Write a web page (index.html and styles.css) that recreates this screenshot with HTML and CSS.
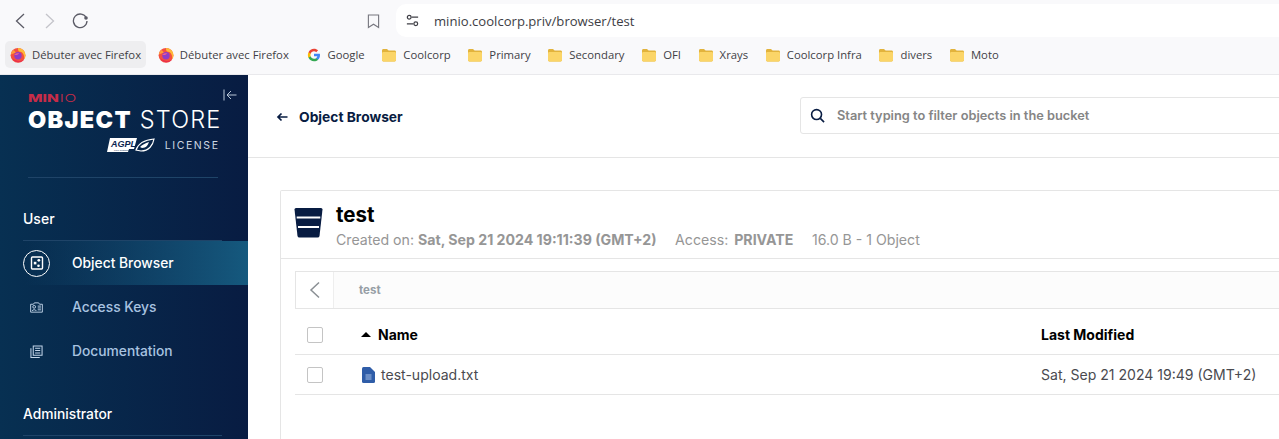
FILE: index.html
```html
<!DOCTYPE html>
<html lang="fr">
<head>
<meta charset="utf-8">
<title>MinIO Object Store</title>
<link rel="stylesheet" href="styles.css">
</head>
<body>
<svg width="0" height="0" class="defs">
  <defs>
    <symbol id="folder" viewBox="0 0 16 16">
      <path d="M1 3.500C1 2.700 1.600 2 2.400 2H6l1.600 1.600h6C14.400 3.600 15 4.200 15 5v8c0 .8-.6 1.400-1.400 1.400H2.400C1.600 14.400 1 13.800 1 13z" fill="#e2b33c"/>
      <path d="M1 6.300c0-.7.6-1.300 1.300-1.300h11.400c.7 0 1.300.6 1.300 1.300V13c0 .8-.6 1.400-1.400 1.400H2.400C1.600 14.400 1 13.800 1 13z" fill="#fbd568"/>
    </symbol>
    <symbol id="firefox" viewBox="0 0 16 16">
      <circle cx="8" cy="8.300" r="7.400" fill="#f4503f"/>
      <path d="M8 .9c4 0 7.500 3 7.500 7.400 0 1.500-.5 3-1.300 4C14.800 8 12.500 4.500 9 4.500 8 3.500 8 2 8 .9z" fill="#ffb938"/>
      <path d="M.8 7.500C1 5.500 2.200 3.800 3.600 3L6 5.500z" fill="#ff9a3c"/>
      <circle cx="8" cy="8.800" r="3.700" fill="#8f3cc8"/>
      <path d="M4.300 8c1-1.500 3-2 5-1.500L7 8z" fill="#f0608a"/>
      <path d="M2 11c1.500 3 4 4.300 6.500 4.300 2.500 0 4.500-1.300 5.700-3-2 1.500-4.500 2-6.700 1.400C5.500 13.200 3.500 12.500 2 11z" fill="#ea2f4c"/>
    </symbol>
  </defs>
</svg>
<header class="chrome">
  <div class="toolbar">
    <div class="nav">
      <svg class="nav-ic" viewBox="0 0 16 16"><path d="M12 1 4.500 8l7.500 7" fill="none" stroke="#5b5b66" stroke-width="1.300"/></svg>
      <svg class="nav-ic" viewBox="0 0 16 16"><path d="m4 1 7.500 7L4 15" fill="none" stroke="#c4c4ca" stroke-width="1.300"/></svg>
      <svg class="nav-ic" viewBox="0 0 16 16"><path d="M14.300 4.800A6.800 6.800 0 1 0 15 8" fill="none" stroke="#5b5b66" stroke-width="1.300"/><circle cx="14" cy="5" r="1.800" fill="#5b5b66"/></svg>
    </div>
    <svg class="bookmark" viewBox="0 0 14 16"><path d="M1.500 1.500h11V15L7 11.500 1.500 15z" fill="none" stroke="#77777f" stroke-width="1.200"/></svg>
    <div class="urlbar">
      <svg class="tune" viewBox="0 0 16 16"><g fill="none" stroke="#3f3f46" stroke-width="1.300"><circle cx="4.500" cy="4.500" r="2"/><path d="M7 4.500h7M2 11.500h7"/><circle cx="11.500" cy="11.500" r="2"/></g></svg>
      <span class="url">minio.coolcorp.priv/browser/test</span>
    </div>
  </div>
  <nav class="bookmarks">
    <a class="bm bm-hover"><svg class="bm-ic"><use href="#firefox"/></svg>Débuter avec Firefox</a>
    <a class="bm"><svg class="bm-ic"><use href="#firefox"/></svg>Débuter avec Firefox</a>
    <a class="bm"><svg class="bm-ic" viewBox="0 0 24 24"><path d="M21 12.200c0-.7-.1-1.300-.2-1.900H12v3.600h5c-.2 1.200-.9 2.100-1.900 2.800v2.300h3C20 17.300 21 15 21 12.200z" fill="#4285f4"/><path d="M12 21.300c2.500 0 4.600-.8 6.100-2.300l-3-2.300c-.8.6-1.900.9-3.100.9-2.400 0-4.400-1.600-5.100-3.800H3.800v2.400c1.500 3 4.600 5.100 8.200 5.100z" fill="#34a853"/><path d="M6.900 13.800c-.4-1.200-.4-2.400 0-3.600V7.800H3.800c-1.300 2.500-1.300 5.500 0 8.400z" fill="#fbbc05"/><path d="M12 6.400c1.300 0 2.500.5 3.400 1.400L18.100 5C16.500 3.600 14.400 2.700 12 2.700c-3.600 0-6.700 2-8.200 5.100l3.100 2.400C7.600 8 9.600 6.400 12 6.400z" fill="#ea4335"/></svg>Google</a>
    <a class="bm"><svg class="bm-ic"><use href="#folder"/></svg>Coolcorp</a>
    <a class="bm"><svg class="bm-ic"><use href="#folder"/></svg>Primary</a>
    <a class="bm"><svg class="bm-ic"><use href="#folder"/></svg>Secondary</a>
    <a class="bm"><svg class="bm-ic"><use href="#folder"/></svg>OFI</a>
    <a class="bm"><svg class="bm-ic"><use href="#folder"/></svg>Xrays</a>
    <a class="bm"><svg class="bm-ic"><use href="#folder"/></svg>Coolcorp Infra</a>
    <a class="bm"><svg class="bm-ic"><use href="#folder"/></svg>divers</a>
    <a class="bm"><svg class="bm-ic"><use href="#folder"/></svg>Moto</a>
  </nav>
</header>
<div class="app">
  <aside class="sidebar">
    <div class="brand">
      <svg class="collapse" viewBox="0 0 14 12"><path d="M1 .5v11M13.500 6H4M8 2 4 6l4 4" fill="none" stroke="#b9c8d8" stroke-width="1"/></svg>
      <div class="minio"><b>MIN</b><span class="minio-sep">I</span><span class="minio-o">O</span></div>
      <div class="product"><b>OBJECT</b> STORE</div>
      <div class="license">
        <svg class="agpl" viewBox="0 0 48 16">
          <path d="M3 1h27l-3 11h-5l-1 3H0z" fill="#fff"/>
          <path d="M29 13c2-6 8-10 18-11-1 6-5 12-13 12z" fill="none" stroke="#fff" stroke-width="1.200"/>
          <path d="M33 10c2-2 5-4 9-5-1 3-3 6-7 6z" fill="#fff"/>
          <text x="4" y="10" class="agpl-t">AGPL</text>
          <text x="7" y="14.400" class="agpl-s">Free Software</text>
        </svg>
        <span class="license-t">LICENSE</span>
      </div>
    </div>
    <div class="group">
      <div class="group-title">User</div>
      <ul class="menu">
        <li class="item active">
          <span class="ic-ring"><svg class="ic ic-active" viewBox="0 0 14 14"><rect x="1.500" y="1" width="11" height="12" rx="1" fill="none" stroke="#fff" stroke-width="1.400"/><circle cx="8.800" cy="4.300" r="1.400" fill="#fff"/><rect x="3.800" y="5.800" width="2.600" height="2.600" fill="#fff"/><circle cx="8.500" cy="9.700" r="1.300" fill="#fff"/></svg></span>
          Object Browser
        </li>
        <li class="item">
          <span class="ic-plain"><svg class="ic" viewBox="0 0 14 14"><path d="M.7 3.500h3l1-1.500h4.600l1 1.500h3v8.500H.7z" fill="none" stroke="#c4d6ea" stroke-width="1"/><circle cx="4.500" cy="6.300" r="1.500" fill="none" stroke="#c4d6ea"/><path d="M2.200 10.800c.4-1.900 4.200-1.900 4.600 0M8.300 5.500h3.500M8.300 7.500h3.500M8.300 9.500h3.500" fill="none" stroke="#c4d6ea"/></svg></span>
          Access Keys
        </li>
        <li class="item">
          <span class="ic-plain"><svg class="ic" viewBox="0 0 14 14"><path d="M3.500 1h9.500v10H3.500zM1 3.500V13.500h9.500M5.500 3.500H11M5.500 6H11M5.500 8.500H11" fill="none" stroke="#c4d6ea" stroke-width="1.100"/></svg></span>
          Documentation
        </li>
      </ul>
    </div>
    <div class="group group-admin">
      <div class="group-title">Administrator</div>
    </div>
  </aside>
  <main class="main">
    <div class="topbar">
      <div class="crumb">
        <svg class="back" viewBox="0 0 12 10"><path d="M11.500 5H2M5.500 1.500 2 5l3.500 3.500" fill="none" stroke="#081c42" stroke-width="1.700"/></svg>
        <span>Object Browser</span>
      </div>
      <div class="search">
        <svg class="search-ic" viewBox="0 0 16 16"><circle cx="7" cy="7" r="5.300" fill="none" stroke="#081c42" stroke-width="1.700"/><path d="m11 11 4 4" stroke="#081c42" stroke-width="1.700"/></svg>
        <span class="search-t">Start typing to filter objects in the bucket</span>
      </div>
    </div>
    <section class="card">
      <div class="bucket">
        <svg class="bucket-ic" viewBox="0 0 29 30"><path d="M.500 1.500Q.500 0 2 0h25q1.500 0 1.500 1.500L25.500 28q-.2 1.500-2 1.500h-18q-1.800 0-2-1.500z" fill="#081c42"/><path d="M2.700 9.500h23.600M4 19h21" stroke="#fff" stroke-width="2"/></svg>
        <div class="bucket-info">
          <h1 class="bucket-name">test</h1>
          <p class="bucket-meta"><span>Created on: <b>Sat, Sep 21 2024 19:11:39 (GMT+2)</b></span><span>Access: <b class="access">PRIVATE</b></span><span>16.0 B - 1 Object</span></p>
        </div>
      </div>
      <div class="browser">
        <div class="path">
          <span class="path-back"><svg class="path-chev" viewBox="0 0 12 18"><path d="M10 1.500 2 9l8 7.500" fill="none" stroke="#8a8f94" stroke-width="1.500"/></svg></span>
          <span class="path-t">test</span>
        </div>
        <div class="row row-head">
          <span class="cell-check"><span class="check"></span></span>
          <span class="cell-name"><svg class="sort" viewBox="0 0 10 5"><path d="M5 0 10 5H0z" fill="#000"/></svg>Name</span>
          <span class="cell-date">Last Modified</span>
        </div>
        <div class="row row-body">
          <span class="cell-check"><span class="check"></span></span>
          <span class="cell-name"><svg class="file" viewBox="0 0 13 16"><path d="M1.500 0H8l5 5v9.500q0 1.500-1.500 1.500h-10Q0 16 0 14.500v-13Q0 0 1.500 0z" fill="#2f5da8"/><path d="M3.500 8h6M3.500 10h6M3.500 12h6" stroke="#a9c1e6" stroke-width="1"/></svg>test-upload.txt</span>
          <span class="cell-date">Sat, Sep 21 2024 19:49 (GMT+2)</span>
        </div>
      </div>
    </section>
  </main>
</div>
</body>
</html>
```

FILE: styles.css
```css
* { box-sizing: border-box; }
html, body { margin: 0; height: 100%; }
body { width: 1279px; height: 439px; overflow: hidden; background: #fff; font-family: Inter, "Liberation Sans", sans-serif; display: flex; flex-direction: column; }
.defs { position: absolute; }

.chrome { background: #f9f9fb; height: 75px; flex: none; font-family: "Open Sans", "Noto Sans", sans-serif; }
.toolbar { height: 38px; display: flex; align-items: center; padding: 3px 0 0; }
.nav { display: flex; gap: 14px; padding-left: 12px; width: 367px; flex: none; }
.nav-ic { width: 16px; height: 16px; }
.bookmark { width: 13px; height: 16px; flex: none; }
.urlbar { margin-left: 16px; flex: 1; height: 33px; background: #fff; border-radius: 10px 0 0 10px; display: flex; align-items: center; padding-left: 9px; gap: 14px; }
.tune { width: 15px; height: 15px; flex: none; }
.url { font-size: 13.100px; color: #3d3d44; }

.bookmarks { height: 37px; display: flex; align-items: center; gap: 6.700px; padding: 0 5px 3px; border-bottom: 1px solid #e9e9ec; }
.bm { display: flex; align-items: center; gap: 6px; height: 27px; padding: 0 5px; font-size: 11.300px; color: #3f3f46; border-radius: 5px; white-space: nowrap; }
.bm-hover { background: #eeeef0; }
.bm-ic { width: 16px; height: 16px; flex: none; }

.app { flex: 1; display: flex; min-height: 0; }
.sidebar { width: 248px; flex: none; background: linear-gradient(90deg, #073052 0%, #081c42 100%); color: #fff; }
.brand { height: 103px; margin: 0 30px 0 28px; padding-top: 18px; border-bottom: 1px solid #1f4468; position: relative; }
.collapse { position: absolute; right: -19px; top: 14px; width: 14px; height: 12px; }
.minio { font-size: 10px; line-height: 10px; color: #c72c48; display: flex; align-items: center; height: 10px; transform: scaleX(1.55); transform-origin: left center; }
.minio b { font-weight: 800; }
.minio-sep { font-weight: 300; margin: 0 .5px; }
.minio-o { font-weight: 300; }
.product { font-size: 23.500px; line-height: 28px; font-weight: 300; white-space: nowrap; color: #fff; letter-spacing: 1.200px; margin-top: 3px; }
.product b { font-weight: 900; letter-spacing: 1.300px; }
.license { display: flex; align-items: center; justify-content: flex-end; gap: 10px; margin-top: 3px; }
.agpl { width: 48px; height: 16px; }
.agpl-t { font: italic 900 9px "Liberation Sans", sans-serif; fill: #0b2550; }
.agpl-s { font: 400 2.500px "Liberation Sans", sans-serif; fill: #0b2550; }
.license-t { font-size: 10.500px; letter-spacing: 1.600px; margin-right: -1.600px; color: #cdd8e3; font-weight: 400; }

.group { padding: 32px 0 0; }
.group-title { font-size: 14px; line-height: 17px; margin-left: 23px; width: 199px; font-weight: 500; color: #fff; padding-bottom: 13px; border-bottom: 1px solid #1f4468; }
.menu { list-style: none; margin: 0; padding: 0; }
.item { height: 44px; display: flex; align-items: center; font-size: 13.800px; font-weight: 500; color: #a9c3e0; padding-left: 23px; gap: 22px; }
.active { color: #fff; background: linear-gradient(90deg, rgba(8,28,66,0) 10%, #15597e 100%); }
.ic-ring, .ic-plain { width: 27px; height: 27px; flex: none; display: flex; align-items: center; justify-content: center; border-radius: 50%; }
.ic-ring { border: 1px solid #fff; }
.ic { width: 13px; height: 13px; }
.ic-active { width: 14px; height: 14px; }
.group-admin { padding-top: 33px; }
.group-admin .group-title { font-size: 13.800px; padding-bottom: 12px; }

.main { flex: 1; min-width: 0; overflow: hidden; }
.topbar { height: 83px; border-bottom: 1px solid #e5e5e5; display: flex; align-items: center; padding: 2px 0 0 28px; width: 1031px; }
.crumb { display: flex; align-items: center; gap: 11px; font-size: 13.800px; font-weight: 700; color: #081c42; width: 524px; flex: none; }
.back { width: 12px; height: 10px; }
.search { width: 560px; height: 37px; margin-top: -3px; border: 1px solid #e5e5e5; border-radius: 3px; display: flex; align-items: center; padding-left: 9px; gap: 12px; flex: none; }
.search-ic { width: 15px; height: 15px; }
.search-t { font-size: 12.800px; font-weight: 600; color: #858585; }

.card { margin: 32px 0 0 32px; width: 1100px; height: 260px; border: 1px solid #e5e5e5; border-bottom: 0; border-radius: 2px 0 0 0; }
.bucket { height: 68px; padding: 14px 0 0 13px; display: flex; gap: 13px; border-bottom: 1px solid #e5e5e5; }
.bucket-ic { width: 29px; height: 30px; margin-top: 3px; flex: none; }
.bucket-name { margin: 0; font-size: 20.500px; line-height: 20px; font-weight: 700; color: #000; }
.bucket-meta { margin: 6px 0 0; font-size: 14.150px; line-height: 17px; color: #969696; display: flex; gap: 18.500px; }
.bucket-meta b { font-weight: 700; }
.bucket-meta .access { margin-left: 2px; }
.browser { padding: 12px 0 0 14px; }
.path { height: 38px; border: 1px solid #e5e5e5; display: flex; align-items: center; background: #fcfcfc; }
.path-back { width: 38px; height: 36px; display: flex; align-items: center; justify-content: center; border-right: 1px solid #eee; background: #fff; flex: none; }
.path-chev { width: 12px; height: 18px; }
.path-t { font-size: 11.500px; font-weight: 700; color: #969ea5; margin-left: 25px; }
.row { display: flex; align-items: center; border-bottom: 1px solid #e5e5e5; }
.row-head { height: 46px; padding-top: 6px; font-size: 14px; font-weight: 700; color: #000; }
.row-body { height: 40px; font-size: 14.050px; color: #4a4a4f; }
.cell-check { width: 66px; padding-left: 12px; flex: none; display: flex; }
.check { width: 16px; height: 16px; border: 1px solid #c4c4c4; border-radius: 2px; background: #fff; }
.cell-name { width: 680px; flex: none; display: flex; align-items: center; }
.cell-date { white-space: nowrap; }
.sort { width: 10px; height: 5px; margin-right: 7px; }
.file { width: 13px; height: 16px; margin: 0 6px 0 1px; }
```
